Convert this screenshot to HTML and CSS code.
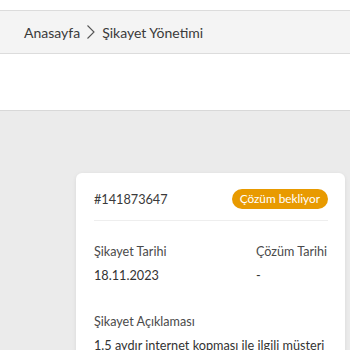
FILE: index.html
```html
<!DOCTYPE html>
<html lang="tr">
<head>
<meta charset="utf-8">
<link rel="stylesheet" href="styles.css">
</head>
<body>
<div class="top"></div>
<nav class="crumbs">
  <span class="crumb">Anasayfa</span>
  <svg class="chev" width="10" height="16" viewBox="0 0 10 16"><path d="M1.5 1.5 L8 8 L1.5 14.5" fill="none" stroke="#555" stroke-width="1.1"/></svg>
  <span class="crumb">Şikayet Yönetimi</span>
</nav>
<div class="blank"></div>
<main class="content">
  <section class="card">
    <div class="head">
      <span class="id">#141873647</span>
      <span class="badge">Çözüm bekliyor</span>
    </div>
    <div class="row">
      <div class="col">
        <div class="label">Şikayet Tarihi</div>
        <div class="value">18.11.2023</div>
      </div>
      <div class="col col2">
        <div class="label">Çözüm Tarihi</div>
        <div class="value">-</div>
      </div>
    </div>
    <div class="desc">
      <div class="label">Şikayet Açıklaması</div>
      <div class="value">1.5 aydır internet kopması ile ilgili müşteri</div>
    </div>
  </section>
</main>
</body>
</html>
```
FILE: styles.css
```css
html, body { margin: 0; padding: 0; }
body {
  width: 350px; height: 350px; overflow: hidden;
  font-family: Lato, "Noto Sans", sans-serif;
  color: #333;
  background: #ebebeb;
}
.top { height: 10px; background: #fff; border-bottom: 1px solid #dcdcdc; }
.crumbs {
  height: 42px; background: #f4f4f4; border-bottom: 1px solid #dcdcdc;
  display: flex; align-items: center; padding-left: 24px; gap: 5px;
  font-size: 14px; color: #3a3a3a;
}
.chev { margin: 0 1px; }
.blank { height: 56px; background: #fff; border-bottom: 1px solid #d8d8d8; }
.content { padding: 62px 5px 0 76px; }
.card {
  background: #fff; border-radius: 6px;
  box-shadow: 0 1px 4px rgba(0,0,0,0.08);
  padding: 0 17px 0 18px;
  height: 300px;
}
.head {
  display: flex; justify-content: space-between; align-items: center;
  height: 48px; padding-top: 4px; box-sizing: border-box;
  border-bottom: 1px solid #eeeeee;
  font-size: 12.7px; color: #3a3a3a;
}
.badge {
  background: #e89a00; color: #fff; font-size: 11.8px;
  border-radius: 10px; padding: 1px 8px 1px; line-height: 18px;
}
.row { display: flex; justify-content: space-between; padding-top: 20px; }
.col2 { white-space: nowrap; width: 72px; }
.label { font-size: 12.6px; color: #4a4a4a; line-height: 22px; white-space: nowrap; }
.value { font-size: 12.7px; color: #333; line-height: 22px; margin-top: 1px; white-space: nowrap; }
.desc { padding-top: 25px; }
```
